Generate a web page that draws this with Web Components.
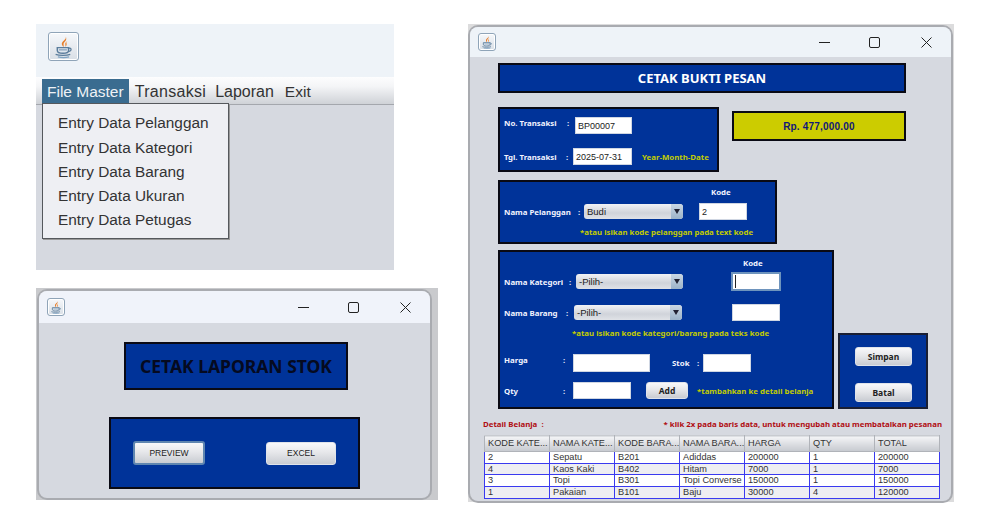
<!DOCTYPE html>
<html><head><meta charset="utf-8">
<style>
html,body{margin:0;padding:0;background:#fff}
body{width:994px;height:526px;position:relative;overflow:hidden;font-family:"Liberation Sans",sans-serif}
.row{display:flex;align-items:center}
.top{align-self:flex-start}
.menu-items{display:flex;flex-direction:column}
</style></head><body>
<template id="java-t"><style>:host{display:block;box-sizing:border-box;border:1px solid #8fa4b8;border-radius:3px;background:linear-gradient(#f6f8fb,#d9dfe6);box-shadow:inset 0 0 0 1px #fff}svg{display:block;width:100%;height:100%}</style>
<svg viewBox="0 0 24 24"><path d="M14 3C15 6 10 7 10.500 10C10.700 11 11.500 11.700 12 12.500C12.500 11 11.800 10 12.200 9C12.800 7.500 15.500 6.500 14 3Z" fill="#e67f2e"/><path d="M15.500 7C14 8 13 9 13.500 10.500C13.700 11.200 13.600 11.800 13.400 12.300C15 11.200 15.200 10 14.800 9C14.500 8.300 14.800 7.700 15.500 7Z" fill="#ee9a55"/><path d="M6.500 13H16.500V15.500C16.500 17.200 14.500 18 11.500 18S6.500 17.200 6.500 15.500Z" fill="#dfe6ee" stroke="#5b7d9c" stroke-width="1.300"/><path d="M8 15H15" stroke="#7d9ab5" stroke-width="1"/><path d="M16.500 13.500C19.500 13 19.500 16 16.300 16.500" fill="none" stroke="#5b7d9c" stroke-width="1.100"/><path d="M5 19C8 20.200 15 20.200 18 19" fill="none" stroke="#5b7d9c" stroke-width="1.200"/><path d="M7 21.300C10 22 14 22 17 21.300" fill="none" stroke="#7fa3c2" stroke-width="1.100"/></svg></template>

<template id="win-t"><style>
:host{display:block;position:absolute;box-sizing:border-box;background:var(--back,#cfd0d3);padding:var(--pad,3px)}
.w{box-sizing:border-box;height:100%;background:#d6d9e0;border-radius:8px;overflow:hidden;display:flex;flex-direction:column;box-shadow:0 0 0 2px #a9abb0}
.bar{height:var(--bar,32px);flex:none;background:var(--barc,#f0f3fa);display:flex;align-items:center;box-sizing:border-box;padding-left:var(--il,8px)}
x-java{width:18px;height:18px}
svg{display:block;flex:none}
.sp{flex:1}
.body{flex:1;min-height:0;position:relative}
</style><div class="w"><div class="bar"><x-java></x-java><span class="sp"></span>
<svg width="11" height="11" viewBox="0 0 11 11"><path d="M0 5.500h11" stroke="#222" stroke-width="1"/></svg><span style="width:39px"></span>
<svg width="11" height="11" viewBox="0 0 11 11"><rect x=".5" y=".5" width="10" height="10" rx="1.500" fill="none" stroke="#222"/></svg><span style="width:41px"></span>
<svg width="11" height="11" viewBox="0 0 11 11"><path d="M.5.500l10 10M10.500.500l-10 10" stroke="#222" stroke-width="1" fill="none"/></svg><span style="width:var(--ir,19px)"></span>
</div><div class="body"><slot></slot></div></div></template>

<template id="panel-t"><style>:host{display:block;box-sizing:border-box;background:#003399;border:2px solid #0a0a14;flex:none}</style><slot></slot></template>
<template id="lab-t"><style>:host{display:block;flex:none;font:bold 7.850px "Noto Sans",sans-serif;color:#f2f4ff;white-space:nowrap;line-height:12px}:host([y]){color:#c2cc00}:host([r]){color:#b00d12}</style><slot></slot></template>
<template id="field-t"><style>:host{display:flex;align-items:center;flex:none;box-sizing:border-box;background:#fff;border:1px solid #cfd6e2;height:18px;font:9px "Liberation Sans",sans-serif;color:#222;padding-left:2px;white-space:nowrap}:host([focus]){border:2px solid #6e94bd}</style><slot></slot></template>
<template id="combo-t"><style>:host{display:flex;flex:none;align-items:center;box-sizing:border-box;height:15px;border-radius:3px;background:linear-gradient(#f1f2f5,#d0d3da 60%,#e0e2e7);font:9.500px "Liberation Sans",sans-serif;color:#222;padding-left:3px;white-space:nowrap;overflow:hidden}
.t{flex:1}.a{width:12px;height:100%;background:linear-gradient(#c9d6e3,#9cb3c9);display:flex;align-items:center;justify-content:center;border-radius:0 3px 3px 0}.a:after{content:"";border-left:3px solid transparent;border-right:3px solid transparent;border-top:5px solid #223}</style><span class="t"><slot></slot></span><span class="a"></span></template>
<template id="btn-t"><style>:host{display:flex;flex:none;align-items:center;justify-content:center;box-sizing:border-box;border-radius:3px;background:linear-gradient(#f8f8fa,#e6e7ea 45%,#c9ccd2);border:1px solid #dfe3ea;color:#222;white-space:nowrap;font:bold 8.500px "Noto Sans",sans-serif}:host([plain]){font:8.500px "Liberation Sans",sans-serif}:host([focus]){border:2px solid #5f86b0}</style><slot></slot></template>

<template id="menuwin-t"><style>
:host{display:block;position:absolute;left:36px;top:24px;width:358px;height:246px;background:#d6d9e0;overflow:visible;font:15.400px "Liberation Sans",sans-serif;color:#333}
.tool{height:53px;background:#eef3f8;box-sizing:border-box;padding:8px 0 0 12px}
x-java{width:31px;height:29px}
.bar{height:28px;box-sizing:border-box;background:linear-gradient(#fdfdfe,#f4f5f7 35%,#cfd2d7);border-bottom:1px solid #a4a7ad;display:flex;padding:2px 0 0 6px;line-height:25px;font-size:16px}
.m{white-space:nowrap}.a{background:#3a6c90;color:#eef2f6;padding:0 5px;font-size:15.500px}
.pop{position:absolute;left:6px;top:79px;width:187px;height:136px;box-sizing:border-box;background:#eeeff3;border:1px solid #55585c;box-shadow:1px 1px 0 #999;padding:7.400px 0 0 15px;line-height:24.200px}
</style><div class="tool"><x-java></x-java></div>
<div class="bar"><span class="m a">File Master</span><span class="m" style="margin-left:6px;letter-spacing:.3px">Transaksi</span><span class="m" style="margin-left:9px">Laporan</span><span class="m" style="margin-left:11px;font-size:15.500px">Exit</span></div>
<div class="pop"><slot></slot></div></template>

<template id="tbl-t"><style>
:host{display:block;width:456px;flex:none}
table{border-collapse:collapse;table-layout:fixed;width:456px;font:9.200px/10.700px "Liberation Sans",sans-serif;color:#333}
th{height:15px;font-weight:normal;text-align:left;padding:0 0 0 3px;background:linear-gradient(#f4f5f7,#d8dade 60%,#c6c9cf);border:1px solid #b0b3b9;border-top-color:#c8cbd0;overflow:hidden;white-space:nowrap}
td{height:10.700px;padding:0 0 0 3px;border:1px solid #3a3af0;white-space:nowrap;overflow:hidden;box-sizing:content-box}
tr:nth-child(odd) td{background:#fff}tr:nth-child(even) td{background:#eeeef2}
</style><table><colgroup><col><col><col><col><col><col><col></colgroup>
<thead><tr><th>KODE KATE...</th><th>NAMA KATE...</th><th>KODE BARA...</th><th>NAMA BARA...</th><th>HARGA</th><th>QTY</th><th>TOTAL</th></tr></thead>
<tbody><tr><td>2</td><td>Sepatu</td><td>B201</td><td>Adiddas</td><td>200000</td><td>1</td><td>200000</td></tr>
<tr><td>4</td><td>Kaos Kaki</td><td>B402</td><td>Hitam</td><td>7000</td><td>1</td><td>7000</td></tr>
<tr><td>3</td><td>Topi</td><td>B301</td><td>Topi Converse</td><td>150000</td><td>1</td><td>150000</td></tr>
<tr><td>1</td><td>Pakaian</td><td>B101</td><td>Baju</td><td>30000</td><td>4</td><td>120000</td></tr></tbody></table></template>

<x-menuwin><div class="menu-items"><span>Entry Data Pelanggan</span><span>Entry Data Kategori</span><span>Entry Data Barang</span><span>Entry Data Ukuran</span><span>Entry Data Petugas</span></div></x-menuwin>

<x-win style="left:36px;top:288px;width:402px;height:212px;--pad:3px 8px 2px 3px;--bar:32px;--il:8px;--ir:19px;--back:#c9cacd">
  <x-panel style="margin:19px 0 0 85px;width:224px;height:48px;display:flex;align-items:center;justify-content:center"><x-lab style="font-size:17.500px;color:#050a20;line-height:20px">CETAK LAPORAN STOK</x-lab></x-panel>
  <x-panel style="margin:27px 0 0 70px;width:251px;height:72px;padding:22px 0 0 22px" class="row"><div class="row top"><x-btn plain focus style="width:72px;height:24px">PREVIEW</x-btn><x-btn plain style="width:70px;height:23px;margin-left:61px">EXCEL</x-btn></div></x-panel>
</x-win>

<x-win style="left:468px;top:24px;width:486px;height:478px;--pad:3px 3px 1px 2px;--bar:30px;--il:8px;--ir:19px;--back:#dcdcdd;--barc:#eef3f8">
  <x-panel style="margin:6px 0 0 28px;width:408px;height:30px;display:flex;align-items:center;justify-content:center"><x-lab style="font-size:13px;color:#fff;line-height:16px">CETAK BUKTI PESAN</x-lab></x-panel>

  <div class="row" style="margin:14px 0 0 28px;align-items:flex-start">
    <x-panel style="width:221px;height:65px;padding:8px 0 0 4px">
      <div class="row" style="height:17px"><x-lab class="top" style="width:63px">No. Transaksi</x-lab><x-lab class="top" style="width:8px">:</x-lab><x-field style="width:57px;height:17px">BP00007</x-field></div>
      <div class="row" style="height:17px;margin-top:14px"><x-lab style="width:62px">Tgl. Transaksi</x-lab><x-lab style="width:7px">:</x-lab><x-field style="width:59px;height:17px">2025-07-31</x-field><x-lab y style="margin-left:10px">Year-Month-Date</x-lab></div>
    </x-panel>
    <x-panel style="width:174px;height:30px;margin:4px 0 0 13px;background:#cccc00;display:flex;align-items:center;justify-content:center"><x-lab style="color:#101878;font:bold 10px 'Liberation Sans',sans-serif;letter-spacing:.2px">Rp. 477,000.00</x-lab></x-panel>
  </div>

  <x-panel style="margin:8px 0 0 28px;width:279px;height:64px;padding:4px 0 0 4px">
    <x-lab style="margin-left:207px">Kode</x-lab>
    <div class="row" style="height:17px;margin-top:5px"><x-lab style="width:74px">Nama Pelanggan</x-lab><x-lab style="width:6px">:</x-lab><x-combo style="width:99px">Budi</x-combo><x-field style="width:48px;height:17px;margin-left:16px">2</x-field></div>
    <x-lab y style="margin:6px 0 0 76px">*atau isikan kode pelanggan pada text kode</x-lab>
  </x-panel>

  <div class="row" style="margin:6px 0 0 28px;align-items:flex-end">
    <x-panel style="width:336px;height:159px;padding:5px 0 0 4px">
      <x-lab style="margin-left:239px">Kode</x-lab>
      <div class="row" style="height:19px;margin-top:3px"><x-lab style="width:65px">Nama Kategori</x-lab><x-lab style="width:7px">:</x-lab><x-combo style="width:107px">-Pilih-</x-combo><x-field focus style="width:50px;height:19px;margin-left:48px"><span style="display:block;width:1px;height:13px;background:#222"></span></x-field></div>
      <div class="row" style="height:17px;margin-top:13px"><x-lab style="width:62px">Nama Barang</x-lab><x-lab style="width:8px">:</x-lab><x-combo style="width:108px">-Pilih-</x-combo><x-field style="width:48px;height:17px;margin-left:50px"></x-field></div>
      <x-lab y style="margin:6px 0 0 68px">*atau isikan kode kategori/barang pada teks kode</x-lab>
      <div class="row" style="height:18px;margin-top:15px"><x-lab class="top" style="width:59px">Harga</x-lab><x-lab class="top" style="width:10px">:</x-lab><x-field style="width:77px">&nbsp;</x-field><x-lab style="margin-left:22px;width:25px">Stok</x-lab><x-lab style="width:6px">:</x-lab><x-field style="width:48px">&nbsp;</x-field></div>
      <div class="row" style="height:17px;margin-top:10px"><x-lab style="width:59px">Qty</x-lab><x-lab style="width:10px">:</x-lab><x-field style="width:58px;height:17px">&nbsp;</x-field><x-btn style="width:42px;height:17px;margin-left:15px">Add</x-btn><x-lab y style="margin-left:9px">*tambahkan ke detail belanja</x-lab></div>
    </x-panel>
    <x-panel style="width:90px;height:76px;margin-left:4px;padding:12px 0 0 15px;border-color:#1a1f33">
      <x-btn style="width:57px;height:19px">Simpan</x-btn>
      <x-btn style="width:57px;height:19px;margin-top:17px">Batal</x-btn>
    </x-panel>
  </div>

  <div class="row" style="margin:9px 0 0 13px;height:12px;justify-content:space-between;width:459px"><x-lab r>Detail Belanja&nbsp; :</x-lab><x-lab r>* klik 2x pada baris data, untuk mengubah atau membatalkan pesanan</x-lab></div>
  <x-tbl style="margin:5px 0 0 14px"></x-tbl>
</x-win>

<script>
function def(name,tid){customElements.define(name,class extends HTMLElement{constructor(){super();this.attachShadow({mode:"open"}).appendChild(document.getElementById(tid).content.cloneNode(true));}});}
def("x-java","java-t");def("x-win","win-t");def("x-panel","panel-t");def("x-lab","lab-t");def("x-field","field-t");def("x-combo","combo-t");def("x-btn","btn-t");def("x-menuwin","menuwin-t");def("x-tbl","tbl-t");
</script>
</body></html>
